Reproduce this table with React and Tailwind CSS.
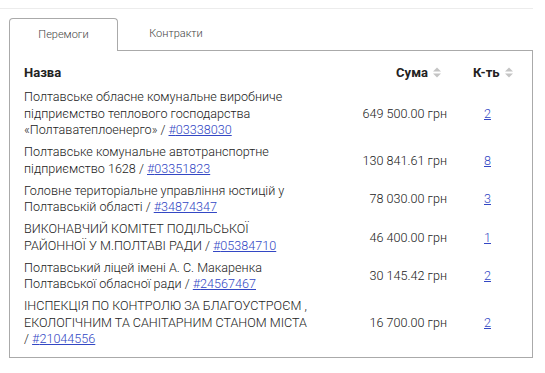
const rows = [
  { name: 'Полтавське обласне комунальне виробниче підприємство теплового господарства «Полтаватеплоенерго»', code: '03338030', sum: '649 500.00 грн', count: 2 },
  { name: 'Полтавське комунальне автотранспортне підприємство 1628', code: '03351823', sum: '130 841.61 грн', count: 8 },
  { name: 'Головне територіальне управління юстицій у Полтавській області', code: '34874347', sum: '78 030.00 грн', count: 3 },
  { name: 'ВИКОНАВЧИЙ КОМІТЕТ ПОДІЛЬСЬКОЇ РАЙОННОЇ У М.ПОЛТАВІ РАДИ', code: '05384710', sum: '46 400.00 грн', count: 1 },
  { name: 'Полтавський ліцей імені А. С. Макаренка Полтавської обласної ради', code: '24567467', sum: '30 145.42 грн', count: 2 },
  { name: 'ІНСПЕКЦІЯ ПО КОНТРОЛЮ ЗА БЛАГОУСТРОЄМ\u00a0, ЕКОЛОГІЧНИМ ТА САНІТАРНИМ СТАНОМ МІСТА', code: '21044556', sum: '16 700.00 грн', count: 2 },
];

function SortIcon() {
  return (
    <svg width="8" height="11" viewBox="0 0 8 11" className="inline-block ml-[5px] align-[-1px]">
      <path d="M0 4.5 L4 0.5 L8 4.5 Z" fill="#c4c4c4" />
      <path d="M0 6.5 L4 10.5 L8 6.5 Z" fill="#c4c4c4" />
    </svg>
  );
}

export default function App() {
  return (
    <div className="w-[545px] h-[373px] bg-white" style={{ fontFamily: 'Roboto, "Liberation Sans", sans-serif' }}>
      <div className="pt-2">
        <div className="h-px w-[533px] bg-[#ececec]" />
      </div>

      {/* Tabs */}
      <div className="flex ml-[9px] mt-[9px]">
        <div className="relative z-10 -mb-px w-[109px] h-[33px] border border-b-0 border-[#aaa] rounded-t-[4px] bg-white flex items-center justify-center text-[11px] font-light text-[#444]">
          Перемоги
        </div>
        <div className="w-[116px] h-[32px] flex items-center justify-center text-[11px] font-light text-[#444]">
          Контракти
        </div>
      </div>

      {/* Panel */}
      <div className="ml-[9px] w-[524px] border border-[#aaa] pl-[14px] pr-[13px] pt-[14px] pb-[6px]">
        <table className="w-full border-collapse text-[12.6px] leading-[16.5px] font-light text-[#222]">
          <thead>
            <tr className="font-bold text-[13px] text-[#222]">
              <th className="w-[294px] text-left pb-[5px] align-middle">Назва</th>
              <th className="w-[129px] text-right pr-[6px] pb-[5px] align-middle whitespace-nowrap">
                Сума<SortIcon />
              </th>
              <th className="text-left pl-[26px] pb-[5px] align-middle whitespace-nowrap">
                К-ть<SortIcon />
              </th>
            </tr>
          </thead>
          <tbody>
            {rows.map((r) => (
              <tr key={r.code}>
                <td className="py-[2.75px] pr-[8px] align-middle">
                  {r.name} / <a href="#" className="text-[#3347c4] underline">#{r.code}</a>
                </td>
                <td className="py-[2.75px] text-right align-middle whitespace-nowrap">{r.sum}</td>
                <td className="py-[2.75px] pl-[37px] align-middle">
                  <a href="#" className="text-[#3347c4] underline">{r.count}</a>
                </td>
              </tr>
            ))}
          </tbody>
        </table>
      </div>
    </div>
  );
}
